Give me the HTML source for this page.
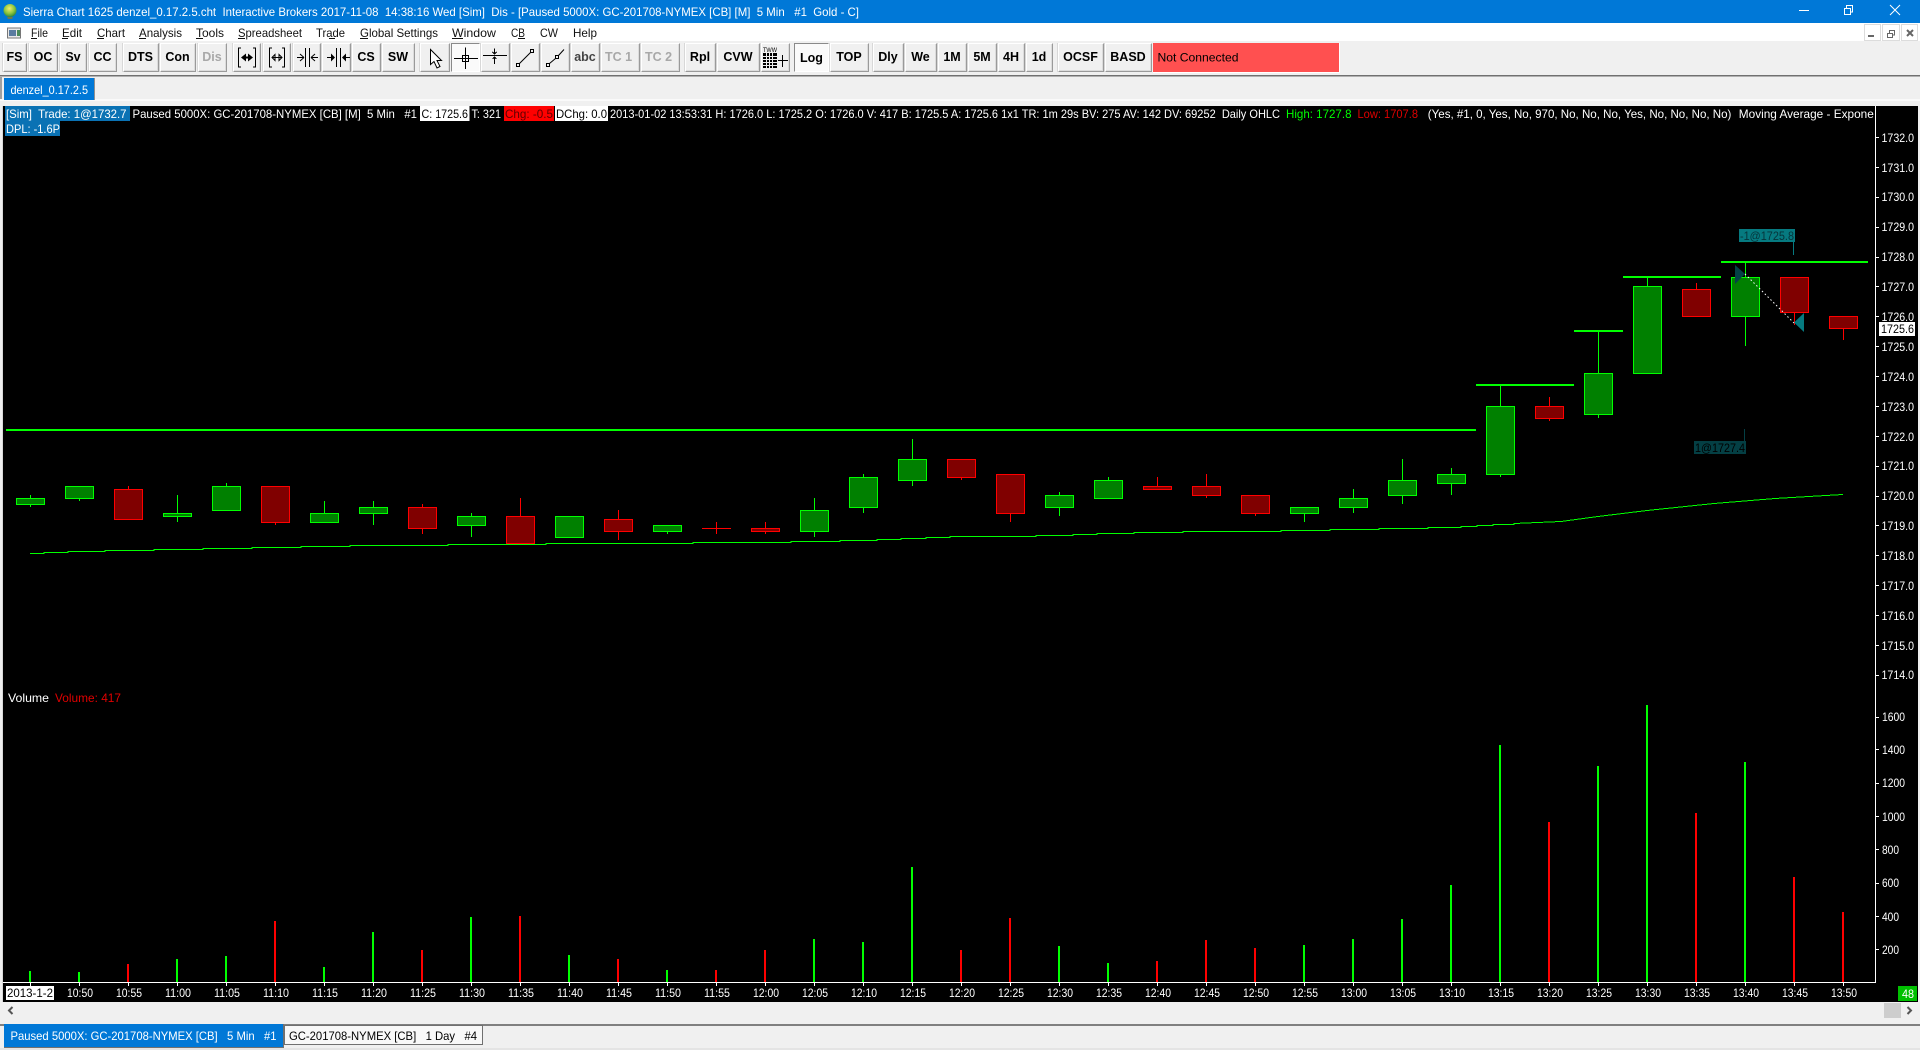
<!DOCTYPE html>
<html>
<head>
<meta charset="utf-8">
<title>Sierra Chart</title>
<style>
html,body{margin:0;padding:0;background:#f0f0f0}
#p{position:relative;width:1920px;height:1050px;overflow:hidden;background:#f0f0f0;font-family:"Liberation Sans",sans-serif}
.b{position:absolute;top:43px;height:29px;box-sizing:border-box;background:#f0f0f0;border:1px solid;border-color:#fff #9a9a9a #9a9a9a #fff;box-shadow:inset -1px -1px 0 #dcdcdc,-1px 0 0 #d8d8d8;font:bold 12.5px/26px "Liberation Sans",sans-serif;color:#000;text-align:center;white-space:nowrap;padding-right:1px}
.d{color:#a8a8a8}
.on{background:#fafafa;border-color:#8a8a8a #fff #fff #8a8a8a;box-shadow:none;padding-right:0}
svg{position:absolute;left:0;top:0}
text{font-family:"Liberation Sans",sans-serif;font-size:12px;white-space:pre;fill:#fff}
.k{fill:#000}
.m{font-size:12px;fill:#111}
.c{shape-rendering:crispEdges}
</style>
</head>
<body>
<div id="p">
<div class="b" style="left:3px;width:24px">FS</div>
<div class="b" style="left:29px;width:29px">OC</div>
<div class="b" style="left:60px;width:27px">Sv</div>
<div class="b" style="left:89px;width:28px">CC</div>
<div class="b" style="left:123px;width:36px">DTS</div>
<div class="b" style="left:160px;width:36px">Con</div>
<div class="b d" style="left:198px;width:29px">Dis</div>
<div class="b" style="left:233px;width:28px"></div>
<div class="b" style="left:263px;width:28px"></div>
<div class="b" style="left:293px;width:28px"></div>
<div class="b" style="left:322px;width:29px"></div>
<div class="b" style="left:352px;width:29px">CS</div>
<div class="b" style="left:382px;width:33px">SW</div>
<div class="b" style="left:420px;width:30px"></div>
<div class="b on" style="left:451px;width:29px"></div>
<div class="b" style="left:481px;width:29px"></div>
<div class="b" style="left:511px;width:29px"></div>
<div class="b" style="left:541px;width:29px"></div>
<div class="b" style="left:571px;width:29px;color:#444">abc</div>
<div class="b d" style="left:601px;width:39px;padding-right:4px">TC 1</div>
<div class="b d" style="left:641px;width:39px;padding-right:4px">TC 2</div>
<div class="b" style="left:685px;width:31px">Rpl</div>
<div class="b" style="left:717px;width:43px">CVW</div>
<div class="b" style="left:761px;width:29px"></div>
<div class="b on" style="left:794px;width:35px;line-height:28px">Log</div>
<div class="b" style="left:830px;width:39px">TOP</div>
<div class="b" style="left:873px;width:31px">Dly</div>
<div class="b" style="left:905px;width:32px">We</div>
<div class="b" style="left:938px;width:29px">1M</div>
<div class="b" style="left:968px;width:29px">5M</div>
<div class="b" style="left:998px;width:27px">4H</div>
<div class="b" style="left:1026px;width:27px">1d</div>
<div class="b" style="left:1058px;width:46px">OCSF</div>
<div class="b" style="left:1105px;width:47px">BASD</div>

<svg width="1920" height="1050" viewBox="0 0 1920 1050" xmlns="http://www.w3.org/2000/svg">
<defs><radialGradient id="gb" cx=".45" cy=".35" r=".7"><stop offset="0" stop-color="#f2ee70"/><stop offset=".55" stop-color="#8cc63f"/><stop offset="1" stop-color="#1f7a3a"/></radialGradient></defs>

<!-- title bar -->
<rect width="1920" height="23" fill="#0078d7"/>
<circle cx="10" cy="10.5" r="6.5" fill="url(#gb)"/>
<path d="M7 17h6l-1 2H8z" fill="#6b7a50"/>
<text x="23" y="16" textLength="836" lengthAdjust="spacingAndGlyphs">Sierra Chart 1625 denzel_0.17.2.5.cht  Interactive Brokers 2017-11-08  14:38:16 Wed [Sim]  Dis - [Paused 5000X: GC-201708-NYMEX [CB] [M]  5 Min   #1  Gold - C]</text>
<g class="c" fill="#fff"><rect x="1799" y="10" width="10" height="1"/></g>
<g fill="none" stroke="#fff" stroke-width="1"><rect x="1844.5" y="8.5" width="6" height="6" class="c"/><path d="M1846.5 8V5.5H1852.5V12H1851" class="c"/><path d="M1890 5l10 10M1900 5l-10 10"/></g>

<!-- menu -->
<rect y="23" width="1920" height="18" fill="#fff"/>
<rect x="7.5" y="28" width="13" height="10" fill="#e8e8e8" stroke="#777"/><rect x="9" y="30" width="7" height="6" fill="#5a7ca0"/><rect x="17" y="30" width="3" height="6" fill="#4a8a5a"/>
<text class="m" x="31" y="37" textLength="17" lengthAdjust="spacingAndGlyphs">File</text>
<text class="m" x="62" y="37" textLength="20" lengthAdjust="spacingAndGlyphs">Edit</text>
<text class="m" x="97" y="37" textLength="28" lengthAdjust="spacingAndGlyphs">Chart</text>
<text class="m" x="139" y="37" textLength="43" lengthAdjust="spacingAndGlyphs">Analysis</text>
<text class="m" x="196" y="37" textLength="28" lengthAdjust="spacingAndGlyphs">Tools</text>
<text class="m" x="238" y="37" textLength="64" lengthAdjust="spacingAndGlyphs">Spreadsheet</text>
<text class="m" x="316" y="37" textLength="29" lengthAdjust="spacingAndGlyphs">Trade</text>
<text class="m" x="360" y="37" textLength="78" lengthAdjust="spacingAndGlyphs">Global Settings</text>
<text class="m" x="452" y="37" textLength="44" lengthAdjust="spacingAndGlyphs">Window</text>
<text class="m" x="511" y="37" textLength="14" lengthAdjust="spacingAndGlyphs">CB</text>
<text class="m" x="540" y="37" textLength="18" lengthAdjust="spacingAndGlyphs">CW</text>
<text class="m" x="573" y="37" textLength="24" lengthAdjust="spacingAndGlyphs">Help</text>
<g class="c" fill="#111"><rect x="31" y="38" width="6" height="1"/><rect x="62" y="38" width="6" height="1"/><rect x="97" y="38" width="7" height="1"/><rect x="139" y="38" width="7" height="1"/><rect x="196" y="38" width="7" height="1"/><rect x="238" y="38" width="7" height="1"/><rect x="329" y="38" width="6" height="1"/><rect x="360" y="38" width="8" height="1"/><rect x="452" y="38" width="11" height="1"/><rect x="518" y="38" width="7" height="1"/></g>
<g class="c" fill="#fff" stroke="#dcdcdc"><rect x="1864.5" y="24.5" width="16" height="16"/><rect x="1882.5" y="24.5" width="17" height="16"/><rect x="1901.5" y="24.5" width="16" height="16"/></g>
<g class="c" fill="#666"><rect x="1868" y="35" width="6" height="2"/></g>
<g fill="none" stroke="#666" class="c"><rect x="1887.5" y="33.5" width="5" height="4"/><path d="M1889.5 33V30.5H1894.5V35H1893"/></g>
<path d="M1907 30l6 6M1913 30l-6 6" stroke="#666" stroke-width="2" fill="none"/>

<!-- toolbar icons -->
<g fill="none" stroke="#000" stroke-width="1" class="c">
<path d="M238.5 48V67M255.5 48V67M238 48h3M238 67h3M253 48h3M253 67h3"/>
<path d="M269.5 48V67M284.5 48V67M269 48h3M269 67h3M282 48h3M282 67h3"/>
<path d="M272 57.5H282"/>
<path d="M305.5 48V67M309.5 48V67M297 57.5h7M311 57.5h7"/>
<path d="M336.5 48V67M340.5 48V67M327 57.5h7M343 57.5h7"/>
</g>
<g fill="#000">
<path d="M241 57.5l5-4v3h1v2h-1v3zM253 57.5l-5-4v3h-1v2h1v3z"/>
<path d="M272 57.5l3-3v6zM282 57.5l-3-3v6z" fill="none" stroke="#000"/>
<path d="M304 57.5l-4-3.5M304 57.5l-4 3.5M311 57.5l4-3.5M311 57.5l4 3.5" stroke="#000" fill="none"/>
<path d="M335 57.5l-4-4v8zM342 57.5l4-4v8z"/>
</g>
<path d="M430.5 49.5V64.5l3.5-3 3 6.500 3-1.500-3-6h4.500z" fill="#fff" stroke="#000"/>
<g fill="none" stroke="#000" class="c">
<path d="M454 58.500H478M465.500 47.500V69"/><rect x="462.500" y="55.500" width="6" height="6"/>
<path d="M483 55.500H507M494.500 48.500V54M492.500 52l2 2 2-2M494.500 57V64M492.500 59l2-2 2 2"/>
<rect x="516.500" y="63.500" width="3" height="3"/><rect x="530.500" y="49.500" width="3" height="3"/>
<rect x="546.500" y="63.500" width="3" height="3"/><rect x="555.500" y="55.500" width="3" height="3"/>
</g>
<path d="M519.500 63.500L530.500 52.500M549.500 63.500L555.500 58.500M558.500 55.500L564 49.500" stroke="#000" fill="none"/>
<text x="763" y="52" style="font-size:6px;fill:#000" textLength="14" lengthAdjust="spacingAndGlyphs">TWW</text>
<g class="c">
<rect x="763" y="53" width="14" height="15" fill="#000"/>
<path d="M763 56.500H777M763 59.500H777M763 62.500H777M763 65.500H777M766.500 53V68M769.500 53V68M772.500 53V68" stroke="#f0f0f0" fill="none"/>
<path d="M778 60.500H788M782.500 55V67" stroke="#000" fill="none"/>
</g>

<!-- not connected -->
<rect x="1153" y="43" width="186" height="29" fill="#ff5050"/>
<rect x="1153" y="72" width="186" height="1" fill="#fff"/><rect x="1339" y="43" width="1" height="30" fill="#fff"/>
<text class="k" x="1157.500" y="61.500" textLength="81" lengthAdjust="spacingAndGlyphs">Not Connected</text>

<!-- separators and tab row -->
<rect y="75" width="1920" height="1" fill="#707070"/><rect y="76" width="1920" height="1" fill="#b0b0b0"/>
<rect x="0" y="77" width="2" height="23" fill="#a0a0a0"/>
<rect y="99" width="1920" height="2" fill="#fafafa"/>
<rect x="4" y="78" width="90" height="22" fill="#0078d7"/><rect x="94" y="78" width="1" height="22" fill="#909090"/>
<text x="10.500" y="94" textLength="77.500" lengthAdjust="spacingAndGlyphs">denzel_0.17.2.5</text>

<!-- chart background -->
<rect x="3" y="106" width="1915" height="896" fill="#000"/>
<rect x="2" y="106" width="1" height="896" fill="#d8d8d8"/>

<!-- info lines -->
<rect x="5" y="106" width="125" height="15" fill="#0a72b4"/>
<rect x="5" y="121" width="55" height="15" fill="#0a72b4"/>
<rect x="420" y="106" width="49.500" height="15" fill="#fff"/>
<rect x="504" y="106" width="50" height="15" fill="#f00"/>
<rect x="555" y="106" width="53" height="15" fill="#fff"/>
<text x="6" y="118" textLength="120.500" lengthAdjust="spacingAndGlyphs">[Sim]  Trade: 1@1732.7</text>
<text x="6" y="133" textLength="54" lengthAdjust="spacingAndGlyphs">DPL: -1.6P</text>
<text x="132.500" y="118" textLength="284.500" lengthAdjust="spacingAndGlyphs">Paused 5000X: GC-201708-NYMEX [CB] [M]  5 Min   #1</text>
<text class="k" x="421.500" y="118" textLength="46.500" lengthAdjust="spacingAndGlyphs">C: 1725.6</text>
<text x="471.500" y="118" textLength="29.500" lengthAdjust="spacingAndGlyphs">T: 321</text>
<text style="fill:#600000" x="505" y="118" textLength="48" lengthAdjust="spacingAndGlyphs">Chg: -0.5</text>
<text class="k" x="556" y="118" textLength="51" lengthAdjust="spacingAndGlyphs">DChg: 0.0</text>
<text x="610" y="118" textLength="670" lengthAdjust="spacingAndGlyphs">2013-01-02 13:53:31 H: 1726.0 L: 1725.2 O: 1726.0 V: 417 B: 1725.5 A: 1725.6 1x1 TR: 1m 29s BV: 275 AV: 142 DV: 69252  Daily OHLC</text>
<text style="fill:#0f0" x="1286" y="118" textLength="65.500" lengthAdjust="spacingAndGlyphs">High: 1727.8</text>
<text style="fill:#e00000" x="1357.500" y="118" textLength="60.500" lengthAdjust="spacingAndGlyphs">Low: 1707.8</text>
<text x="1427.800" y="118" textLength="303.600" lengthAdjust="spacingAndGlyphs">(Yes, #1, 0, Yes, No, 970, No, No, No, Yes, No, No, No, No)</text>
<text x="1738.800" y="118" textLength="135" lengthAdjust="spacingAndGlyphs">Moving Average - Expone</text>

<!-- moving average -->
<path class="c" fill="none" stroke="#0f0" d="M30 553.500H44V552.500H68V551.500H105V550.500H154V549.500H203V548.500H252V547.500H301V546.500H350V545.500H448V544.500H546V543.500H693V542.500H791V541.500H840V540.500H877V539.500H901V538.500H926V537.500H950V536.500H1036V535.500H1073V534.500H1097V533.500H1134V532.500H1183V531.500H1281V530.500H1330V529.500H1379V528.500H1428V527.500H1461V526.500H1477V525.500H1493V524.500H1514V523.500L1561 521.500L1598 516.500L1647 510.500L1714 503.500L1775 498.500L1843 494.500"/>

<!-- level lines -->
<g class="c" fill="#0f0">
<rect x="6" y="429" width="1470" height="2"/>
<rect x="1476" y="384" width="98" height="2"/>
<rect x="1574" y="330" width="49" height="2"/>
<rect x="1623" y="276" width="98" height="2"/>
<rect x="1721" y="261" width="147" height="2"/>
</g>

<!-- wicks green -->
<g class="c" fill="#0f0">
<rect x="30" y="495" width="1" height="12"/><rect x="79" y="486" width="1" height="15"/><rect x="177" y="495" width="1" height="27"/><rect x="226" y="483" width="1" height="28"/><rect x="324" y="501" width="1" height="22"/><rect x="373" y="501" width="1" height="24"/><rect x="471" y="513" width="1" height="24"/><rect x="667" y="525" width="1" height="9"/><rect x="814" y="498" width="1" height="39"/><rect x="863" y="474" width="1" height="39"/><rect x="912" y="439" width="1" height="47"/><rect x="1059" y="492" width="1" height="24"/><rect x="1108" y="477" width="1" height="22"/><rect x="1304" y="507" width="1" height="15"/><rect x="1353" y="489" width="1" height="24"/><rect x="1402" y="459" width="1" height="45"/><rect x="1451" y="468" width="1" height="27"/><rect x="1500" y="385" width="1" height="92"/><rect x="1598" y="331" width="1" height="87"/><rect x="1647" y="277" width="1" height="96"/><rect x="1745" y="262" width="1" height="84"/>
</g>
<!-- wicks red -->
<g class="c" fill="#f00">
<rect x="128" y="486" width="1" height="34"/><rect x="275" y="486" width="1" height="39"/><rect x="422" y="504" width="1" height="30"/><rect x="520" y="498" width="1" height="46"/><rect x="618" y="510" width="1" height="30"/><rect x="716" y="522" width="1" height="12"/><rect x="765" y="522" width="1" height="12"/><rect x="961" y="459" width="1" height="21"/><rect x="1010" y="474" width="1" height="48"/><rect x="1157" y="477" width="1" height="13"/><rect x="1206" y="474" width="1" height="24"/><rect x="1255" y="495" width="1" height="21"/><rect x="1549" y="397" width="1" height="24"/><rect x="1696" y="283" width="1" height="34"/><rect x="1794" y="277" width="1" height="48"/><rect x="1843" y="316" width="1" height="24"/>
<rect x="702" y="528" width="29" height="1"/>
</g>
<!-- bodies green -->
<g class="c" fill="#008000" stroke="#0f0">
<rect x="16.500" y="498.500" width="28" height="6"/><rect x="65.500" y="486.500" width="28" height="12"/><rect x="163.500" y="513.500" width="28" height="3"/><rect x="212.500" y="486.500" width="28" height="24"/><rect x="310.500" y="513.500" width="28" height="9"/><rect x="359.500" y="507.500" width="28" height="6"/><rect x="457.500" y="516.500" width="28" height="9"/><rect x="555.500" y="516.500" width="28" height="21"/><rect x="653.500" y="525.500" width="28" height="6"/><rect x="800.500" y="510.500" width="28" height="21"/><rect x="849.500" y="477.500" width="28" height="30"/><rect x="898.500" y="459.500" width="28" height="21"/><rect x="1045.500" y="495.500" width="28" height="12"/><rect x="1094.500" y="480.500" width="28" height="18"/><rect x="1290.500" y="507.500" width="28" height="6"/><rect x="1339.500" y="498.500" width="28" height="9"/><rect x="1388.500" y="480.500" width="28" height="15"/><rect x="1437.500" y="474.500" width="28" height="9"/><rect x="1486.500" y="406.500" width="28" height="68"/><rect x="1584.500" y="373.500" width="28" height="41"/><rect x="1633.500" y="286.500" width="28" height="87"/><rect x="1731.500" y="277.500" width="28" height="39"/>
</g>
<!-- bodies red -->
<g class="c" fill="#800000" stroke="#f00">
<rect x="114.500" y="489.500" width="28" height="30"/><rect x="261.500" y="486.500" width="28" height="36"/><rect x="408.500" y="507.500" width="28" height="21"/><rect x="506.500" y="516.500" width="28" height="27"/><rect x="604.500" y="519.500" width="28" height="12"/><rect x="751.500" y="528.500" width="28" height="3"/><rect x="947.500" y="459.500" width="28" height="18"/><rect x="996.500" y="474.500" width="28" height="39"/><rect x="1143.500" y="486.500" width="28" height="3"/><rect x="1192.500" y="486.500" width="28" height="9"/><rect x="1241.500" y="495.500" width="28" height="18"/><rect x="1535.500" y="406.500" width="28" height="12"/><rect x="1682.500" y="289.500" width="28" height="27"/><rect x="1780.500" y="277.500" width="28" height="35"/><rect x="1829.500" y="316.500" width="28" height="12"/>
</g>

<!-- trades -->
<rect x="1739" y="229" width="56" height="13" fill="#067a80"/>
<text x="1740" y="240" style="fill:#06343a" textLength="54" lengthAdjust="spacingAndGlyphs">-1@1725.8</text>
<rect x="1793" y="242" width="1" height="13" fill="#067a80"/>
<rect x="1694" y="441" width="52" height="13" fill="#043f44"/>
<text x="1695" y="452" style="fill:#000" textLength="50" lengthAdjust="spacingAndGlyphs">1@1727.4</text>
<rect x="1744" y="429" width="1" height="12" fill="#043f44"/>
<path d="M1735 265V284L1745 274Z" fill="#044146"/>
<path d="M1804 313V332L1794 322.500Z" fill="#067a80"/>
<path d="M1745 274L1794 323" stroke="#fff" stroke-dasharray="1.500 2.500" fill="none"/>

<!-- volume -->
<text x="8" y="702" textLength="41" lengthAdjust="spacingAndGlyphs">Volume</text>
<text x="55" y="702" style="fill:#e00000" textLength="66" lengthAdjust="spacingAndGlyphs">Volume: 417</text>
<g class="c" fill="#0f0" transform="translate(-1 0)">
<rect x="30" y="971" width="2" height="11"/><rect x="79" y="972" width="2" height="10"/><rect x="177" y="959" width="2" height="23"/><rect x="226" y="956" width="2" height="26"/><rect x="324" y="967" width="2" height="15"/><rect x="373" y="932" width="2" height="50"/><rect x="471" y="917" width="2" height="65"/><rect x="569" y="955" width="2" height="27"/><rect x="667" y="970" width="2" height="12"/><rect x="814" y="939" width="2" height="43"/><rect x="863" y="942" width="2" height="40"/><rect x="912" y="867" width="2" height="115"/><rect x="1059" y="946" width="2" height="36"/><rect x="1108" y="963" width="2" height="19"/><rect x="1304" y="945" width="2" height="37"/><rect x="1353" y="939" width="2" height="43"/><rect x="1402" y="919" width="2" height="63"/><rect x="1451" y="885" width="2" height="97"/><rect x="1500" y="745" width="2" height="237"/><rect x="1598" y="766" width="2" height="216"/><rect x="1647" y="705" width="2" height="277"/><rect x="1745" y="762" width="2" height="220"/>
</g>
<g class="c" fill="#f00" transform="translate(-1 0)">
<rect x="128" y="964" width="2" height="18"/><rect x="275" y="921" width="2" height="61"/><rect x="422" y="950" width="2" height="32"/><rect x="520" y="916" width="2" height="66"/><rect x="618" y="959" width="2" height="23"/><rect x="716" y="970" width="2" height="12"/><rect x="765" y="950" width="2" height="32"/><rect x="961" y="950" width="2" height="32"/><rect x="1010" y="918" width="2" height="64"/><rect x="1157" y="961" width="2" height="21"/><rect x="1206" y="940" width="2" height="42"/><rect x="1255" y="948" width="2" height="34"/><rect x="1549" y="822" width="2" height="160"/><rect x="1696" y="813" width="2" height="169"/><rect x="1794" y="877" width="2" height="105"/><rect x="1843" y="912" width="2" height="70"/>
</g>

<!-- axes -->
<g class="c" fill="#fff">
<rect x="1875" y="106" width="1" height="877"/>
<rect x="3" y="982" width="1873" height="1"/>
</g>
<line class="c" x1="30" x2="1875" y1="984.500" y2="984.500" stroke="#fff" stroke-width="3" stroke-dasharray="1 48"/>
<path class="c" stroke="#fff" fill="none" d="M1876 137.500h3M1876 167.500h3M1876 197.500h3M1876 227.500h3M1876 257.500h3M1876 286.500h3M1876 316.500h3M1876 346.500h3M1876 376.500h3M1876 406.500h3M1876 436.500h3M1876 466.500h3M1876 496.500h3M1876 525.500h3M1876 555.500h3M1876 585.500h3M1876 615.500h3M1876 645.500h3M1876 675.500h3M1876 717.500h3M1876 749.500h3M1876 783.500h3M1876 816.500h3M1876 849.500h3M1876 883.500h3M1876 916.500h3M1876 949.500h3"/>

<g>
<text x="1881.500" y="142" textLength="32.500" lengthAdjust="spacingAndGlyphs">1732.0</text>
<text x="1881.500" y="172" textLength="32.500" lengthAdjust="spacingAndGlyphs">1731.0</text>
<text x="1881.500" y="201" textLength="32.500" lengthAdjust="spacingAndGlyphs">1730.0</text>
<text x="1881.500" y="231" textLength="32.500" lengthAdjust="spacingAndGlyphs">1729.0</text>
<text x="1881.500" y="261" textLength="32.500" lengthAdjust="spacingAndGlyphs">1728.0</text>
<text x="1881.500" y="291" textLength="32.500" lengthAdjust="spacingAndGlyphs">1727.0</text>
<text x="1881.500" y="321" textLength="32.500" lengthAdjust="spacingAndGlyphs">1726.0</text>
<text x="1881.500" y="351" textLength="32.500" lengthAdjust="spacingAndGlyphs">1725.0</text>
<text x="1881.500" y="381" textLength="32.500" lengthAdjust="spacingAndGlyphs">1724.0</text>
<text x="1881.500" y="411" textLength="32.500" lengthAdjust="spacingAndGlyphs">1723.0</text>
<text x="1881.500" y="441" textLength="32.500" lengthAdjust="spacingAndGlyphs">1722.0</text>
<text x="1881.500" y="470" textLength="32.500" lengthAdjust="spacingAndGlyphs">1721.0</text>
<text x="1881.500" y="500" textLength="32.500" lengthAdjust="spacingAndGlyphs">1720.0</text>
<text x="1881.500" y="530" textLength="32.500" lengthAdjust="spacingAndGlyphs">1719.0</text>
<text x="1881.500" y="560" textLength="32.500" lengthAdjust="spacingAndGlyphs">1718.0</text>
<text x="1881.500" y="590" textLength="32.500" lengthAdjust="spacingAndGlyphs">1717.0</text>
<text x="1881.500" y="620" textLength="32.500" lengthAdjust="spacingAndGlyphs">1716.0</text>
<text x="1881.500" y="650" textLength="32.500" lengthAdjust="spacingAndGlyphs">1715.0</text>
<text x="1881.500" y="679" textLength="32.500" lengthAdjust="spacingAndGlyphs">1714.0</text>
</g>
<rect x="1879" y="322" width="36" height="14" fill="#fff"/>
<text class="k" x="1881" y="333" textLength="33" lengthAdjust="spacingAndGlyphs">1725.6</text>
<g>
<text x="1882" y="721" textLength="23" lengthAdjust="spacingAndGlyphs">1600</text>
<text x="1882" y="754" textLength="23" lengthAdjust="spacingAndGlyphs">1400</text>
<text x="1882" y="787" textLength="23" lengthAdjust="spacingAndGlyphs">1200</text>
<text x="1882" y="821" textLength="23" lengthAdjust="spacingAndGlyphs">1000</text>
<text x="1882" y="854" textLength="17" lengthAdjust="spacingAndGlyphs">800</text>
<text x="1882" y="887" textLength="17" lengthAdjust="spacingAndGlyphs">600</text>
<text x="1882" y="921" textLength="17" lengthAdjust="spacingAndGlyphs">400</text>
<text x="1882" y="954" textLength="17" lengthAdjust="spacingAndGlyphs">200</text>
</g>

<!-- time labels -->
<rect x="6" y="986" width="48" height="14" fill="#fff"/>
<text class="k" x="7" y="997" textLength="46" lengthAdjust="spacingAndGlyphs">2013-1-2</text>
<g text-anchor="middle">
<text x="80" y="997" textLength="26" lengthAdjust="spacingAndGlyphs">10:50</text>
<text x="129" y="997" textLength="26" lengthAdjust="spacingAndGlyphs">10:55</text>
<text x="178" y="997" textLength="26" lengthAdjust="spacingAndGlyphs">11:00</text>
<text x="227" y="997" textLength="26" lengthAdjust="spacingAndGlyphs">11:05</text>
<text x="276" y="997" textLength="26" lengthAdjust="spacingAndGlyphs">11:10</text>
<text x="325" y="997" textLength="26" lengthAdjust="spacingAndGlyphs">11:15</text>
<text x="374" y="997" textLength="26" lengthAdjust="spacingAndGlyphs">11:20</text>
<text x="423" y="997" textLength="26" lengthAdjust="spacingAndGlyphs">11:25</text>
<text x="472" y="997" textLength="26" lengthAdjust="spacingAndGlyphs">11:30</text>
<text x="521" y="997" textLength="26" lengthAdjust="spacingAndGlyphs">11:35</text>
<text x="570" y="997" textLength="26" lengthAdjust="spacingAndGlyphs">11:40</text>
<text x="619" y="997" textLength="26" lengthAdjust="spacingAndGlyphs">11:45</text>
<text x="668" y="997" textLength="26" lengthAdjust="spacingAndGlyphs">11:50</text>
<text x="717" y="997" textLength="26" lengthAdjust="spacingAndGlyphs">11:55</text>
<text x="766" y="997" textLength="26" lengthAdjust="spacingAndGlyphs">12:00</text>
<text x="815" y="997" textLength="26" lengthAdjust="spacingAndGlyphs">12:05</text>
<text x="864" y="997" textLength="26" lengthAdjust="spacingAndGlyphs">12:10</text>
<text x="913" y="997" textLength="26" lengthAdjust="spacingAndGlyphs">12:15</text>
<text x="962" y="997" textLength="26" lengthAdjust="spacingAndGlyphs">12:20</text>
<text x="1011" y="997" textLength="26" lengthAdjust="spacingAndGlyphs">12:25</text>
<text x="1060" y="997" textLength="26" lengthAdjust="spacingAndGlyphs">12:30</text>
<text x="1109" y="997" textLength="26" lengthAdjust="spacingAndGlyphs">12:35</text>
<text x="1158" y="997" textLength="26" lengthAdjust="spacingAndGlyphs">12:40</text>
<text x="1207" y="997" textLength="26" lengthAdjust="spacingAndGlyphs">12:45</text>
<text x="1256" y="997" textLength="26" lengthAdjust="spacingAndGlyphs">12:50</text>
<text x="1305" y="997" textLength="26" lengthAdjust="spacingAndGlyphs">12:55</text>
<text x="1354" y="997" textLength="26" lengthAdjust="spacingAndGlyphs">13:00</text>
<text x="1403" y="997" textLength="26" lengthAdjust="spacingAndGlyphs">13:05</text>
<text x="1452" y="997" textLength="26" lengthAdjust="spacingAndGlyphs">13:10</text>
<text x="1501" y="997" textLength="26" lengthAdjust="spacingAndGlyphs">13:15</text>
<text x="1550" y="997" textLength="26" lengthAdjust="spacingAndGlyphs">13:20</text>
<text x="1599" y="997" textLength="26" lengthAdjust="spacingAndGlyphs">13:25</text>
<text x="1648" y="997" textLength="26" lengthAdjust="spacingAndGlyphs">13:30</text>
<text x="1697" y="997" textLength="26" lengthAdjust="spacingAndGlyphs">13:35</text>
<text x="1746" y="997" textLength="26" lengthAdjust="spacingAndGlyphs">13:40</text>
<text x="1795" y="997" textLength="26" lengthAdjust="spacingAndGlyphs">13:45</text>
<text x="1844" y="997" textLength="26" lengthAdjust="spacingAndGlyphs">13:50</text>
</g>
<rect x="1898" y="986" width="19" height="15" fill="#00c000"/>
<text x="1902" y="998" textLength="12" lengthAdjust="spacingAndGlyphs">48</text>

<!-- scrollbar -->
<rect x="0" y="1002" width="1920" height="22" fill="#f0f0f0"/>
<path d="M12.500 1007l-3.500 3.500 3.500 3.500" fill="none" stroke="#555" stroke-width="2"/>
<rect x="1884" y="1003" width="17" height="15" fill="#cdcdcd"/>
<path d="M1907.500 1007l3.500 3.500-3.500 3.500" fill="none" stroke="#555" stroke-width="2"/>

<!-- bottom tabs -->
<rect x="0" y="1024" width="1920" height="2" fill="#808080"/>
<rect y="1048" width="1920" height="2" fill="#e4e4e4"/>
<rect x="4" y="1024" width="280" height="23" fill="#0078d7"/>
<rect x="4" y="1047" width="280" height="1" fill="#707070"/><rect x="283" y="1024" width="1" height="24" fill="#707070"/>
<rect x="284.500" y="1025.500" width="198" height="19" fill="#f8f8f8" stroke="#707070"/>
<text x="10.500" y="1040" textLength="266" lengthAdjust="spacingAndGlyphs">Paused 5000X: GC-201708-NYMEX [CB]   5 Min   #1</text>
<text class="k" x="289" y="1040" textLength="188" lengthAdjust="spacingAndGlyphs">GC-201708-NYMEX [CB]   1 Day   #4</text>
</svg>
</div>
</body>
</html>
